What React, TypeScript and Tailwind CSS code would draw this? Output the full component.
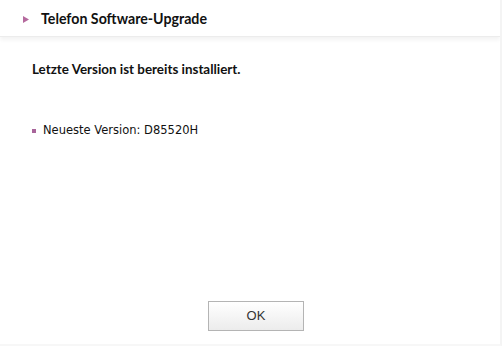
export default function App() {
  return (
    <div className="w-[502px] h-[346px] bg-white flex flex-col border-r-2 border-r-[#f4f4f4] border-b-2 border-b-[#f7f7f7] overflow-hidden" style={{ fontFamily: 'Lato, sans-serif' }}>
      <div className="h-[37px] flex items-center pl-[23px] pt-[2px] shrink-0 border-b border-[#ececec] shadow-[0_3px_4px_rgba(0,0,0,0.05)]">
        <svg width="6" height="7" viewBox="0 0 6 7" className="mr-[12px]">
          <polygon points="0,0 6,3.5 0,7" fill="#b56a9e" />
        </svg>
        <span className="text-[14.2px] font-bold text-[#111]">Telefon Software-Upgrade</span>
      </div>
      <div className="flex-1 flex flex-col pl-[32px] pt-[24px]">
        <p className="text-[13.4px] font-bold text-[#111] leading-[16px]">Letzte Version ist bereits installiert.</p>
        <div className="flex items-center mt-[45px]">
          <span className="w-[4px] h-[4px] bg-[#a8649a] mr-[7px]" />
          <span className="text-[11.5px] text-[#111]" style={{ fontFamily: '"DejaVu Sans", sans-serif' }}>Neueste Version: D85520H</span>
        </div>
        <div className="flex-1" />
      </div>
      <div className="flex justify-center pb-[13px] pl-[12px]">
        <button className="w-[96px] h-[30px] border border-[#b4b4b4] bg-gradient-to-b from-white to-[#ececec] text-[13px] text-[#333]" style={{ fontFamily: '"Liberation Sans", sans-serif' }}>OK</button>
      </div>
    </div>
  );
}
